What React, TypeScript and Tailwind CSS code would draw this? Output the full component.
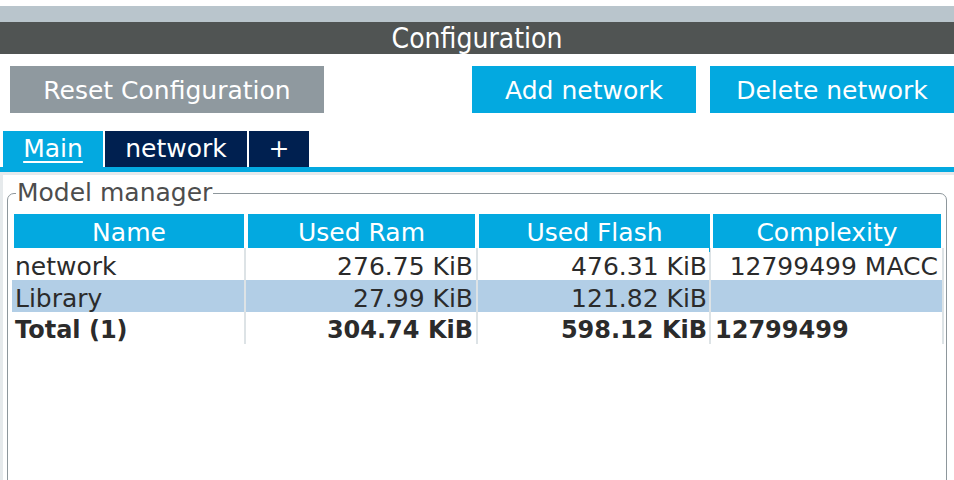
import React from 'react';

const rows = [
  { name: 'network', ram: '276.75 KiB', flash: '476.31 KiB', cx: '12799499 MACC', sel: false, bold: false },
  { name: 'Library', ram: '27.99 KiB', flash: '121.82 KiB', cx: '', sel: true, bold: false },
  { name: 'Total (1)', ram: '304.74 KiB', flash: '598.12 KiB', cx: '12799499', sel: false, bold: true },
];

const App = () => {
  return (
    <div
      className="w-[954px] h-[480px] overflow-hidden bg-white text-[#2b2b2b]"
      style={{ fontFamily: '"DejaVu Sans", "Liberation Sans", sans-serif' }}
    >
      <div className="h-[6px]" />
      <div className="h-[16px] bg-[#b9c5cc]" />
      <div className="h-[32px] bg-[#505453] flex items-center justify-center text-white text-[28px] leading-none [font-stretch:condensed] pt-[1px]">
        Configuration
      </div>

      {/* action buttons */}
      <div className="flex mt-[12px] h-[47px] text-white text-[25px]">
        <button className="ml-[10px] w-[314px] bg-[#8f999f] flex items-center justify-center pt-[2px]">
          Reset Configuration
        </button>
        <button className="ml-[148px] w-[224px] bg-[#03a9e0] flex items-center justify-center pt-[2px]">
          Add network
        </button>
        <button className="ml-[14px] w-[244px] bg-[#03a9e0] flex items-center justify-center pt-[2px]">
          Delete network
        </button>
      </div>

      {/* tabs */}
      <div className="flex mt-[18px] h-[36px] text-white text-[25px]">
        <div className="ml-[3px] w-[100px] bg-[#03a9e0] flex items-center justify-center underline underline-offset-[4px] decoration-[2px]">
          Main
        </div>
        <div className="ml-[2px] w-[142px] bg-[#002050] flex items-center justify-center">network</div>
        <div className="ml-[2px] w-[60px] bg-[#002050] flex items-center justify-center">+</div>
      </div>
      <div className="h-[5px] bg-[#03a9e0]" />

      <div className="border-t-[3px] border-l-[3px] border-[#e6eaec] h-[320px] pt-[5px] pl-[4px]">
        <fieldset className="w-[940px] h-[400px] border border-[#8e979c] rounded-[7px] pl-[4px] pr-0 pt-[8px]">
          <legend className="ml-[4px] px-[1px] text-[25px] leading-[26px] text-[#4d4d4d]">Model manager</legend>

          {/* table header */}
          <div className="ml-[2px] grid grid-cols-[230px_227px_230px_228px] gap-x-[4px] h-[32px] text-white text-[25px]">
            <div className="bg-[#03a9e0] flex items-center justify-center">Name</div>
            <div className="bg-[#03a9e0] flex items-center justify-center">Used Ram</div>
            <div className="bg-[#03a9e0] flex items-center justify-center mr-[-1px]">Used Flash</div>
            <div className="bg-[#03a9e0] flex items-center justify-center">Complexity</div>
          </div>

          {/* table body */}
          <div className="mt-[2px] w-[932px] bg-[#dde3e6] pr-[2px] pb-[2px] flex flex-col gap-y-[2px]">
            {rows.map((r) => (
              <div
                key={r.name}
                className={`grid grid-cols-[232px_230px_231px_231px] gap-x-[2px] h-[30px] ${
                  r.bold ? 'font-bold text-[24px]' : 'text-[25px]'
                }`}
              >
                <div className={`${r.sel ? 'bg-[#b2cee6]' : 'bg-white'} flex items-center pl-[3px] whitespace-nowrap`}>
                  {r.name}
                </div>
                <div className={`${r.sel ? 'bg-[#b2cee6]' : 'bg-white'} flex items-center justify-end pr-[3px] whitespace-nowrap`}>
                  {r.ram}
                </div>
                <div className={`${r.sel ? 'bg-[#b2cee6]' : 'bg-white'} flex items-center justify-end pr-[2px] whitespace-nowrap`}>
                  {r.flash}
                </div>
                <div
                  className={`${r.sel ? 'bg-[#b2cee6]' : 'bg-white'} flex items-center whitespace-nowrap ${
                    r.bold ? 'justify-start pl-[4px]' : 'justify-end pr-[4px]'
                  }`}
                >
                  {r.cx}
                </div>
              </div>
            ))}
          </div>
        </fieldset>
      </div>
    </div>
  );
};

export default App;
